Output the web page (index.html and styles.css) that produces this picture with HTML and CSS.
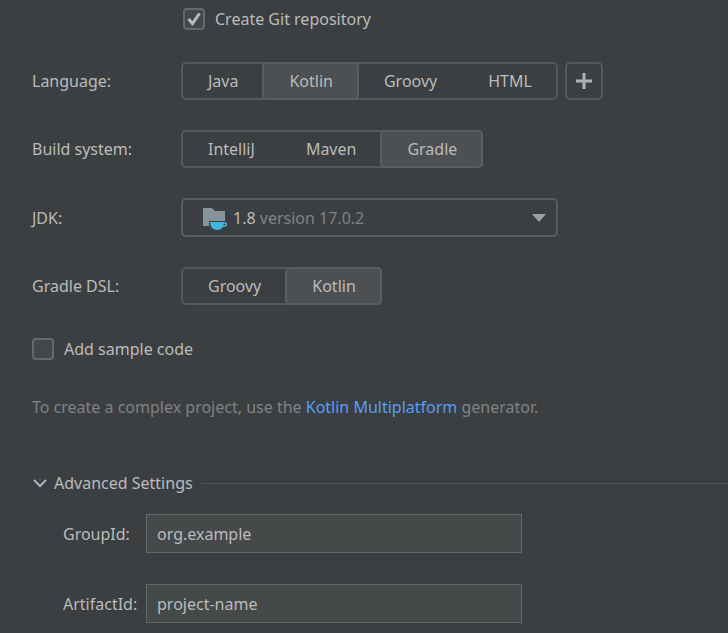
FILE: index.html
```html
<!DOCTYPE html>
<html lang="en">
<head>
<meta charset="utf-8">
<title>New Project</title>
<link rel="stylesheet" href="styles.css">
</head>
<body>
<form class="wizard">
  <label class="check check-git">
    <input type="checkbox" checked>
    <span class="box"><svg viewBox="0 0 18 18" aria-hidden="true"><path d="M3.5 9 7.5 13.5 14.5 3.5"/></svg></span>
    <span>Create Git repository</span>
  </label>

  <div class="row">
    <span class="caption" id="language">Language:</span>
    <div class="segments" role="radiogroup" aria-labelledby="language">
      <label class="segment"><input type="radio" name="language">Java</label>
      <label class="segment"><input type="radio" name="language" checked>Kotlin</label>
      <label class="segment"><input type="radio" name="language">Groovy</label>
      <label class="segment"><input type="radio" name="language">HTML</label>
    </div>
    <button class="add" type="button" aria-label="Add language">
      <svg viewBox="0 0 16 16" aria-hidden="true"><path d="M8 0V16M0 8H16"/></svg>
    </button>
  </div>

  <div class="row">
    <span class="caption" id="build">Build system:</span>
    <div class="segments" role="radiogroup" aria-labelledby="build">
      <label class="segment"><input type="radio" name="build">IntelliJ</label>
      <label class="segment"><input type="radio" name="build">Maven</label>
      <label class="segment"><input type="radio" name="build" checked>Gradle</label>
    </div>
  </div>

  <div class="row">
    <label class="caption" for="jdk">JDK:</label>
    <div class="combo">
      <svg class="folder" viewBox="0 0 24 24" aria-hidden="true">
        <path fill="#87939a" d="M0 2H9L12 5H22V15H6V20H0Z"/>
        <path fill="#40b6e0" d="M7 16H21Q24 16 24 18.500T20 21Q18 24 14 24Q7 23 7 16ZM20.500 17.500V19.500Q22.500 19.500 22.500 18.500T20.500 17.500Z" fill-rule="evenodd"/>
      </svg>
      <span class="combo-text">1.8 <span class="muted">version 17.0.2</span></span>
      <svg class="arrow" viewBox="0 0 14 8" aria-hidden="true"><path d="M0 0H14L7 8Z"/></svg>
      <select id="jdk"><option>1.8 version 17.0.2</option></select>
    </div>
  </div>

  <div class="row">
    <span class="caption" id="dsl">Gradle DSL:</span>
    <div class="segments" role="radiogroup" aria-labelledby="dsl">
      <label class="segment"><input type="radio" name="dsl">Groovy</label>
      <label class="segment"><input type="radio" name="dsl" checked>Kotlin</label>
    </div>
  </div>

  <label class="check">
    <input type="checkbox">
    <span class="box"><svg viewBox="0 0 18 18" aria-hidden="true"><path d="M3.5 9 7.5 13.5 14.5 3.5"/></svg></span>
    <span>Add sample code</span>
  </label>

  <p class="hint">To create a complex project, use the <a href="#">Kotlin Multiplatform</a> generator.</p>

  <details class="advanced" open>
    <summary>
      <svg viewBox="0 0 16 10" aria-hidden="true"><path d="M2 2 8 8 14 2"/></svg>
      <span>Advanced Settings</span>
    </summary>
    <div class="fields">
      <label for="group">GroupId:</label>
      <input id="group" type="text" value="org.example">
      <label for="artifact">ArtifactId:</label>
      <input id="artifact" type="text" value="project-name">
    </div>
  </details>
</form>
</body>
</html>
```

FILE: styles.css
```css
* {
  box-sizing: border-box;
}

body {
  margin: 0;
  background: #3c3f41;
  color: #bbbbbb;
  font: 16px/22px "Noto Sans", "Open Sans", sans-serif;
}

.wizard {
  padding: 8px 0 10px 32px;
}

.check {
  display: flex;
  align-items: center;
  gap: 10px;
  width: fit-content;
  position: relative;
}

.check-git {
  margin: 0 0 32px 151px;
}

.check input,
.segment input,
.combo select {
  position: absolute;
  inset: 0;
  width: 100%;
  height: 100%;
  margin: 0;
  opacity: 0;
}

.box {
  width: 22px;
  height: 22px;
  border: 2px solid #66696b;
  border-radius: 4px;
  background: #43494a;
}

.box svg {
  display: block;
  width: 18px;
  height: 18px;
  fill: none;
  stroke: #bbbbbb;
  stroke-width: 3;
  visibility: hidden;
}

.check input:checked + .box svg {
  visibility: visible;
}

.row {
  display: flex;
  align-items: center;
  margin-bottom: 30px;
}

.row + .check {
  margin-top: 33px;
}

.caption {
  flex: 0 0 149px;
}

.segments {
  display: flex;
  height: 38px;
  border-radius: 5px;
  box-shadow: inset 0 0 0 2px #56595b;
}

.segment {
  position: relative;
  display: flex;
  align-items: center;
  padding: 0 24px 0 25px;
  border: 2px solid transparent;
  border-radius: 5px;
}

.segment + .segment {
  margin-left: -2px;
}

.segment:has(:checked) {
  border-color: #5b5e60;
  background: #4c5052;
}

.add {
  display: grid;
  place-items: center;
  width: 38px;
  height: 38px;
  margin-left: 7px;
  padding: 0;
  border: 2px solid #56595b;
  border-radius: 5px;
  background: none;
}

.add svg {
  width: 16px;
  height: 16px;
  stroke: #afb1b3;
  stroke-width: 3;
}

.combo {
  position: relative;
  display: flex;
  align-items: center;
  width: 377px;
  height: 39px;
  padding: 0 10px 0 20px;
  border: 2px solid #5a5d5f;
  border-radius: 5px;
}

.folder {
  width: 24px;
  height: 24px;
  margin-right: 6px;
}

.muted,
.hint {
  color: #808284;
}

.arrow {
  width: 14px;
  height: 8px;
  margin-left: auto;
  fill: #9da0a2;
}

.hint {
  margin: 36px 0 54px;
}

.hint a {
  color: #589df6;
  text-decoration: none;
}

.advanced summary {
  display: flex;
  align-items: center;
  list-style: none;
}

.advanced summary svg {
  width: 16px;
  height: 10px;
  margin-right: 6px;
  fill: none;
  stroke: #afb1b3;
  stroke-width: 2;
}

.advanced summary::after {
  content: "";
  flex: 1;
  height: 1px;
  margin-left: 8px;
  background: #515456;
}

.fields {
  display: grid;
  grid-template-columns: 83px minmax(0, 376px);
  align-items: center;
  row-gap: 31px;
  padding: 20px 16px 0 31px;
}

.fields input {
  width: 100%;
  height: 39px;
  padding: 0 10px;
  border: 1px solid #646768;
  border-radius: 0;
  background: #45494a;
  color: #bbbbbb;
  font: inherit;
}
```
